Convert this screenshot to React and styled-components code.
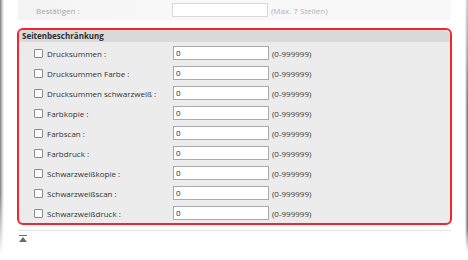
import styled, { createGlobalStyle } from "styled-components";

const Global = createGlobalStyle`
  html, body {
    margin: 0;
    padding: 0;
    background: #fff;
  }
  body {
    font-family: "Open Sans", "Noto Sans", sans-serif;
    font-size: 8px;
    color: #333;
  }
`;

const Frame = styled.div`
  display: flex;
  width: 468px;
  height: 260px;
  overflow: hidden;
  background: #fff;
`;

const LeftShade = styled.div`
  width: 4px;
  flex-shrink: 0;
  background:
    linear-gradient(to bottom, rgba(255, 255, 255, 0) 0%, rgba(255, 255, 255, 0) 75%, #fff 98%),
    linear-gradient(to right, #7c7c7c, #c8c8c8 50%, #fff);
`;

const RightShade = styled.div`
  width: 3px;
  margin-left: auto;
  flex-shrink: 0;
  background:
    linear-gradient(to bottom, rgba(255, 255, 255, 0.6) 0%, rgba(255, 255, 255, 0) 40%, rgba(255, 255, 255, 0) 88%, #fff 97%),
    linear-gradient(to right, #fff, #9a9a9a 60%, #6e6e6e);
`;

const Main = styled.div`
  width: 435px;
  margin-left: 13px;
  display: flex;
  flex-direction: column;
`;

const TopRow = styled.div`
  display: flex;
  align-items: center;
  height: 20px;
  margin-left: 1px;
  margin-right: 1px;
  background: linear-gradient(to right, #f3f3f3, #f8f8f8 30%, #f8f8f8);
`;

const Section = styled.section`
  margin-top: 8px;
  border: 2px solid #f2262c;
  border-radius: 6px;
  overflow: hidden;
  background: #ececec;
`;

const SectionHeader = styled.div`
  height: 12px;
  line-height: 12px;
  padding-left: 3px;
  background: #dadada;
  font-weight: 700;
  color: #2f2f2f;
`;

const SectionBody = styled.div`
  padding-top: 1px;
`;

const Row = styled.div`
  display: flex;
  align-items: center;
  height: 20px;
  padding-left: ${(p) => p.$indent || 15}px;
`;

const Box = styled.span`
  width: 7px;
  height: 7px;
  border: 1px solid #8a8a8a;
  border-radius: 1px;
  background: #fff;
  margin-right: 4px;
  flex-shrink: 0;
`;

const Label = styled.span`
  width: ${(p) => p.$width}px;
  flex-shrink: 0;
  white-space: nowrap;
  color: ${(p) => (p.$muted ? "#a8a8a8" : "#333")};
`;

const Field = styled.div`
  width: 92px;
  height: 12px;
  border: 1px solid ${(p) => (p.$muted ? "#d8d8d8" : "#a9a9a9")};
  background: #fff;
  padding-left: 2px;
  line-height: 12px;
  flex-shrink: 0;
  color: #222;
`;

const Hint = styled.span`
  margin-left: 3px;
  white-space: nowrap;
  color: ${(p) => (p.$muted ? "#b4b4b4" : "#3a3a3a")};
`;

const Divider = styled.div`
  height: 1px;
  margin: 5px 1px 0;
  background: #e4e4e4;
`;

const TopLink = styled.div`
  margin: 2px 0 0 2px;
  width: 8px;
  height: 7px;
`;

const items = [
  "Drucksummen :",
  "Drucksummen Farbe :",
  "Drucksummen schwarzweiß :",
  "Farbkopie :",
  "Farbscan :",
  "Farbdruck :",
  "Schwarzweißkopie :",
  "Schwarzweißscan :",
  "Schwarzweißdruck :",
];

export default function App() {
  return (
    <>
      <Global />
      <Frame>
        <LeftShade />
        <Main>
          <TopRow>
            <Row $indent={18}>
              <Label $muted $width={136}>Bestätigen :</Label>
              <Field $muted />
              <Hint $muted>(Max. 7 Stellen)</Hint>
            </Row>
          </TopRow>
          <Section>
            <SectionHeader>Seitenbeschränkung</SectionHeader>
            <SectionBody>
              {items.map((name) => (
                <Row key={name}>
                  <Box />
                  <Label $width={126}>{name}</Label>
                  <Field>0</Field>
                  <Hint>(0-999999)</Hint>
                </Row>
              ))}
            </SectionBody>
          </Section>
          <Divider />
          <TopLink>
            <svg width="8" height="7" viewBox="0 0 8 7">
              <rect x="0" y="0" width="8" height="1" fill="#6a6a6a" />
              <polygon points="4,2 8,7 0,7" fill="#6a6a6a" />
            </svg>
          </TopLink>
        </Main>
        <RightShade />
      </Frame>
    </>
  );
}
